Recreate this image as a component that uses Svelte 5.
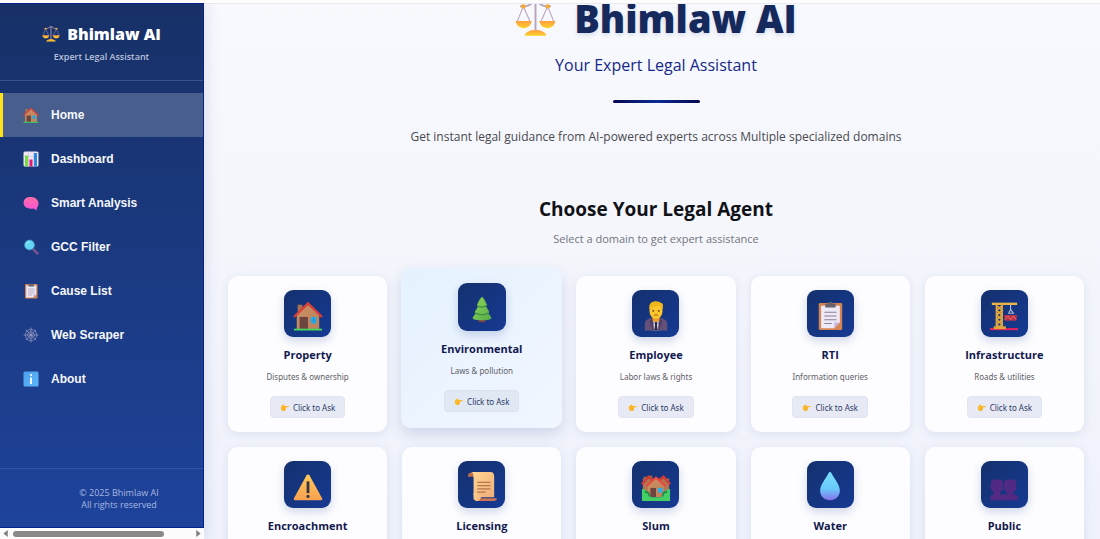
<script lang="ts">
    interface INavItem {
        label: string;
        icon: string;
        active?: boolean;
    }

    interface IAgent {
        title: string;
        text?: string;
        icon: string;
        raised?: boolean;
    }

    const navItems: INavItem[] = [
        { label: 'Home', icon: 'house', active: true },
        { label: 'Dashboard', icon: 'chart' },
        { label: 'Smart Analysis', icon: 'brain' },
        { label: 'GCC Filter', icon: 'magnifier' },
        { label: 'Cause List', icon: 'clipboard' },
        { label: 'Web Scraper', icon: 'web' },
        { label: 'About', icon: 'info' },
    ];

    const agents: IAgent[] = [
        { title: 'Property', text: 'Disputes & ownership', icon: 'house' },
        { title: 'Environmental', text: 'Laws & pollution', icon: 'tree', raised: true },
        { title: 'Employee', text: 'Labor laws & rights', icon: 'worker' },
        { title: 'RTI', text: 'Information queries', icon: 'clipboard' },
        { title: 'Infrastructure', text: 'Roads & utilities', icon: 'crane' },
        { title: 'Encroachment', icon: 'warning' },
        { title: 'Licensing', icon: 'scroll' },
        { title: 'Slum', icon: 'houses' },
        { title: 'Water', icon: 'drop' },
        { title: 'Public', icon: 'people' },
    ];
</script>

{#snippet icon(name: string)}
    <svg class="icon" viewBox="0 0 32 32" aria-hidden="true">
        {#if name === 'scales'}
            <path d="M16 2v24M4 6.500c5 .5 8-1 9.500-3h5c1.500 2 4.500 3.500 9.500 3" fill="none" stroke="#b9a3bd" stroke-width="1.500" />
            <path d="M6.500 6.500 1.500 19M6.500 6.500 12 19M25.500 6.500 20 19M25.500 6.500 30.500 19" stroke="#b79cb8" stroke-width=".8" />
            <circle cx="6.500" cy="6.500" r="1.700" fill="#f6a72c" />
            <circle cx="25.500" cy="6.500" r="1.700" fill="#f6a72c" />
            <path d="M.5 18h12.500c-.5 3.500-3 5.500-6.200 5.500S1 21.500.5 18Z" fill="url(#gold)" />
            <path d="M19 18h12.500c-.5 3.500-3 5.500-6.200 5.500S19.500 21.500 19 18Z" fill="url(#gold)" />
            <path d="M7.500 29.500C8 26.500 12 25 16 25s8 1.500 8.500 4.500Z" fill="url(#gold)" />
        {:else if name === 'house'}
            <path d="M5 4h5v10H5z" fill="#a9714f" />
            <path d="M4 15 16 4l12 11v15H4z" fill="url(#wall)" />
            <path d="M7 17h9v13H7z" fill="#6d4540" />
            <path d="M19 17h6v7h-6z" fill="#2daeea" />
            <path d="M22 17v7M19 20.500h6" stroke="#1687c8" stroke-width=".6" />
            <path d="M1 17 16 2.500 31 17" fill="none" stroke="#dc3d37" stroke-width="2.400" />
            <path d="M1 29.500h30v2H1z" fill="#43d45c" />
        {:else if name === 'chart'}
            <rect x="1" y="1" width="30" height="30" rx="3" fill="#ede7f5" />
            <path d="M1 11h30M1 21h30M11 1v30M21 1v30" stroke="#c6b9d6" />
            <path d="M4 9h6v22H4z" fill="#7bdb45" />
            <path d="M13 17h6v14h-6z" fill="#dc1f70" />
            <path d="M22 4h6v27h-6z" fill="#2c89df" />
        {:else if name === 'brain'}
            <path d="M2 20C-1 11 5 4 14 4c9-1 17 5 17 13 0 4-1 6-3 8l-1 6-5-4c-4 1-9 1-12-1-4 0-6-2-8-6Z" fill="url(#pink)" />
            <path d="M7 20c-2-5 2-7 4-5M10 9c3-2 5 1 4 4M18 7c3 2 1 5 5 6M15 20c3-3 6 1 9-2" fill="none" stroke="#f052bd" stroke-width="1.200" />
        {:else if name === 'magnifier'}
            <path d="m21 21 8 8" stroke="#75518f" stroke-width="5" stroke-linecap="round" />
            <circle cx="13" cy="12" r="10" fill="#63d5f5" stroke="#438bba" stroke-width="1.500" />
            <path d="M7 11c1-4 4-5 7-5" fill="none" stroke="#a5effc" stroke-width="2" />
        {:else if name === 'clipboard'}
            <rect x="4" y="2" width="25" height="29" rx="1.500" fill="#d48352" />
            <path d="M6.500 5h20v18l-6 6h-14z" fill="#eee9f7" />
            <path d="m26.500 23-6 6v-6z" fill="#c6b5d2" />
            <path d="M10 12h13M10 16h13M10 20h13M10 24h8" stroke="#85768f" />
            <path d="M11 3h3c0-3 5-3 5 0h3v4H11z" fill="#67616e" />
        {:else if name === 'web'}
            <g fill="none" stroke="#aaa4ca" stroke-width="1.200">
                <path d="M16 1v30M1 16h30M5.500 5.500l21 21M26.500 5.500l-21 21" />
                <path d="m16 4 8.500 3.500L28 16l-3.500 8.500L16 28l-8.500-3.500L4 16l3.500-8.500ZM16 9l5 2 2 5-2 5-5 2-5-2-2-5 2-5Z" />
                <path d="m16 13 3 3-3 3-3-3Z" />
            </g>
        {:else if name === 'info'}
            <rect x="1" y="1" width="30" height="30" rx="3" fill="url(#sky)" />
            <circle cx="16" cy="8" r="2.200" fill="#fff" />
            <path d="M14.200 13h3.600v13h-3.600z" fill="#fff" />
        {:else if name === 'tree'}
            <path d="M12.500 25h7v5h-7z" fill="#87403f" />
            <path d="M16 3c3 3 4 6 5 8 1 1 0 2-1 2 2 3 3 4 3.500 6 .4 1-.5 2-1 2 2 1.500 3 3 3.500 4.500C26.500 29 5.500 29 6 25.500 6.500 24 8 22 9.500 21c-1 0-1.500-1-1-2 .5-2 2-3 3.500-6-1 0-2-1-1-2 1-2 2-5 5-8Z" fill="url(#leaf)" />
            <path d="M11 12.500c3 2 7 2 10-.5M9 20c4 3 10 3 14 0" fill="none" stroke="#3f8e43" stroke-width="1.300" />
        {:else if name === 'worker'}
            <path d="M4 31.500v-7c0-4 4-6 8-7h8c4 1 8 3 8 7v7z" fill="#675078" />
            <path d="M12 16h8v5l-4 4-4-4z" fill="#e59b25" />
            <path d="m13.500 21 2.500 3 2.500-3 .5 10.500h-6z" fill="#ded8ed" />
            <path d="m14.500 23 1.500-1 1.500 1-.5 3 1 5.500h-4l1-5.500z" fill="#292a48" />
            <path d="m12 18-3 4 4 9.500h1zM20 18l3 4-4 9.500h-1z" fill="#4f3f67" />
            <ellipse cx="16" cy="10.500" rx="7" ry="8.500" fill="#fcc52c" />
            <path d="M9 9C7 0 17-2 23 3c1 2 0 4 0 6l-3-4c-4 1-8 0-11 4Z" fill="#efb71b" />
            <circle cx="13" cy="10.500" r="1" fill="#5c3b2a" />
            <circle cx="19" cy="10.500" r="1" fill="#5c3b2a" />
            <path d="M13.500 15.500c1.500-1 3.500-1 5 0" fill="none" stroke="#965b24" />
        {:else if name === 'crane'}
            <path d="M3 3h27" stroke="#e9b448" stroke-width="2.500" />
            <path d="M8 3v27M14 3v27M8 5l6 5-6 5 6 5-6 5 6 5M14 5l-6 5 6 5-6 5 6 5-6 5" fill="none" stroke="#dfa63c" stroke-width="1.800" />
            <path d="M23 4v5l-2 4h5l-3-4" fill="none" stroke="#aebad4" stroke-width="1.200" />
            <path d="M16 15h14l-1 6H17z" fill="#b63150" />
            <path d="m17 20 3-4 3 4 3-4 3 4" fill="none" stroke="#ef6b52" />
            <path d="M1 30h30" stroke="#e62461" stroke-width="2.200" />
            <path d="M5 27h13v3H5z" fill="#dfa63c" />
        {:else if name === 'warning'}
            <path d="M14.500 3.500c.8-1.200 2.200-1.200 3 0L31 28c.6 1.200 0 2-1.200 2H2.200C1 30 .4 29.200 1 28Z" fill="url(#amber)" />
            <path d="M14.500 10h3v12.500h-3z" fill="#343647" />
            <circle cx="16" cy="26" r="1.700" fill="#343647" />
        {:else if name === 'scroll'}
            <path d="M1 4c0-4 5-4 7-3v4H1z" fill="#bf6b4d" />
            <path d="M4 0h21c3 0 4 2 4 5v22H12c-4 0-5-2-5-5V5c0-3-1-5-3-5Z" fill="url(#paper)" />
            <path d="M11 11h14M11 14.500h14M11 18h14M11 21.500h9" stroke="#b67650" stroke-width="1.200" />
            <path d="M7 22v6c0 2 2 3 4 3h4v-5z" fill="url(#paper)" />
            <path d="M14 28h18c0 2-2 3-4 3H11c2 0 3-1 3-3Z" fill="#ca7355" />
        {:else if name === 'houses'}
            <path d="M2 7h28v18H2z" fill="#b67351" />
            <path d="M3 5h3v5H3zM9 4h3v5H9z" fill="#a66c4c" />
            <path d="m1 13 7-8 7 6M17 11l7-6 7 8" fill="none" stroke="#d33b35" stroke-width="2.500" />
            <path d="m7 14 9-8 9 8v13H7z" fill="url(#wall)" />
            <path d="m6 15 10-9 10 9" fill="none" stroke="#e8463b" stroke-width="2" />
            <path d="M10 17h6v10h-6z" fill="#6d4540" />
            <path d="M18 17h5v5h-5z" fill="#2daeea" />
            <path d="M1 18c5 0 8 4 9 9h12c1-5 4-9 9-9v13H1z" fill="#43cf64" />
            <path d="M4 21c3 0 5 2 5 5M28 21c-3 0-5 2-5 5" fill="none" stroke="#258c4c" stroke-width="2" />
        {:else if name === 'drop'}
            <path d="M16 0c1 0 1.500 1 2 2 4 7 8.500 12 8.500 18 0 6-4.500 10-10.500 10S5.500 26 5.500 20c0-6 4.500-11 8.500-18 .5-1 1-2 2-2Z" fill="url(#water)" />
        {:else if name === 'people'}
            <g fill="#522a83">
                <rect x="2" y="8" width="13" height="13" rx="4" />
                <rect x="16" y="8" width="13" height="13" rx="4" />
                <path d="M5 19h7v5h7v-5h7v5c4 0 5 2 5 6H1c0-4 1-6 4-6z" />
            </g>
        {:else if name === 'point'}
            <path d="M3 14c2-5 7-9 11-9 3 0 2 4 0 6h15c3 0 3 4 0 4h-9c3 1 2 5 0 5 2 1 1 4-1 4 1 1 0 4-2 4h-7c-4 0-8-5-7-14Z" fill="#fcb92e" />
            <path d="M14 15h6M14 20h6M13 24h6" stroke="#e39a20" />
        {/if}
    </svg>
{/snippet}

<svg class="defs" aria-hidden="true">
    <defs>
        <linearGradient id="gold" x2="0" y2="1"><stop stop-color="#ff9d42" /><stop offset="1" stop-color="#fcd324" /></linearGradient>
        <linearGradient id="wall" x2="1" y2="1"><stop stop-color="#cc9065" /><stop offset="1" stop-color="#bb8158" /></linearGradient>
        <linearGradient id="pink" x2="0" y2="1"><stop stop-color="#ff70a7" /><stop offset="1" stop-color="#f453d5" /></linearGradient>
        <linearGradient id="sky" x2="1" y2="1"><stop stop-color="#4ca0ee" /><stop offset="1" stop-color="#5bb6f7" /></linearGradient>
        <linearGradient id="leaf" x2="1" y2="1"><stop stop-color="#91d957" /><stop offset="1" stop-color="#55a948" /></linearGradient>
        <linearGradient id="amber" x2="0" y2="1"><stop stop-color="#ffc957" /><stop offset="1" stop-color="#f8a150" /></linearGradient>
        <linearGradient id="paper" x2="1" y2="1"><stop stop-color="#ffd894" /><stop offset="1" stop-color="#efad79" /></linearGradient>
        <linearGradient id="water" x2="0" y2="1"><stop stop-color="#7ce2ff" /><stop offset=".6" stop-color="#69c8fa" /><stop offset="1" stop-color="#8772eb" /></linearGradient>
    </defs>
</svg>

<div class="app">
    <aside>
        <div class="sidebar">
            <header>
                <div class="brand">{@render icon('scales')}<span>Bhimlaw AI</span></div>
                <p>Expert Legal Assistant</p>
            </header>

            <nav>
                {#each navItems as item}
                    <a href="#{item.icon}" class:active={item.active}>
                        {@render icon(item.icon)}
                        {item.label}
                    </a>
                {/each}
            </nav>

            <footer>
                <p>© 2025 Bhimlaw AI</p>
                <p>All rights reserved</p>
            </footer>
        </div>

        <div class="scrollbar">
            <svg viewBox="0 0 6 8"><path d="M5 0v8L0 4z" /></svg>
            <div class="track"><div class="thumb"></div></div>
            <svg viewBox="0 0 6 8"><path d="M1 0v8l5-4z" /></svg>
        </div>
    </aside>

    <main>
        <section class="hero">
            <h1>{@render icon('scales')}<span>Bhimlaw AI</span></h1>
            <p class="tagline">Your Expert Legal Assistant</p>
            <div class="divider"></div>
            <p class="intro">Get instant legal guidance from AI-powered experts across Multiple specialized domains</p>
        </section>

        <section class="agents">
            <h2>Choose Your Legal Agent</h2>
            <p class="hint">Select a domain to get expert assistance</p>

            <div class="grid">
                {#each agents as agent}
                    <article class:raised={agent.raised}>
                        <div class="tile">{@render icon(agent.icon)}</div>
                        <h3>{agent.title}</h3>
                        {#if agent.text}
                            <p>{agent.text}</p>
                            <button type="button">{@render icon('point')}Click to Ask</button>
                        {/if}
                    </article>
                {/each}
            </div>
        </section>
    </main>
</div>

<style>
    :global(body) {
        background: #fff;
        font-family: "Open Sans", "Noto Sans", sans-serif;
    }

    h1, h2, h3, p {
        margin: 0;
    }

    .defs {
        position: absolute;
        width: 0;
        height: 0;
    }

    .icon {
        display: block;
        flex: none;
    }

    .app {
        display: flex;
        box-sizing: border-box;
        height: 100vh;
        border-top: 3px solid #fdfdfe;
        overflow: hidden;
    }

    aside {
        display: flex;
        flex-direction: column;
        flex: none;
        width: 204px;
        box-shadow: 2px 0 14px rgba(30, 58, 138, 0.12);
        z-index: 1;
    }

    .sidebar {
        display: flex;
        flex: 1;
        flex-direction: column;
        box-sizing: border-box;
        border: solid #07208a;
        border-width: 1px 1px 1px 0;
        background: linear-gradient(#173067, #1e439b);
    }

    header {
        padding: 19px 0 16px;
        border-bottom: 1px solid #38528c;
        text-align: center;

        & p {
            margin-top: 5px;
            color: #b7c1da;
            font-size: 9px;
            font-weight: 600;
            line-height: 14px;
        }
    }

    .brand {
        display: flex;
        align-items: center;
        justify-content: center;
        gap: 7px;
        color: #fff;
        font-size: 16px;
        font-weight: 800;
        line-height: 22px;

        & :global(.icon) {
            width: 18px;
            height: 18px;
        }
    }

    nav {
        display: flex;
        flex: 1;
        flex-direction: column;
        padding-top: 12px;

        & a {
            display: flex;
            align-items: center;
            gap: 12px;
            height: 44px;
            padding-left: 20px;
            border-left: 3px solid transparent;
            color: #f5f7fc;
            font-family: "Liberation Sans", Arial, sans-serif;
            font-size: 12px;
            font-weight: 700;
            text-decoration: none;
        }

        & a.active {
            border-left-color: #ffe21a;
            background: #485e8c;
        }

        & :global(.icon) {
            width: 16px;
            height: 16px;
        }
    }

    footer {
        padding: 18px 0 16px 35px;
        border-top: 1px solid #32539f;
        color: #a7b7e0;
        font-size: 9px;
        line-height: 12px;
        text-align: center;
    }

    .scrollbar {
        display: flex;
        align-items: center;
        gap: 4px;
        height: 11px;
        padding: 0 3px;
        background: #fcfcfd;

        & svg {
            width: 6px;
            height: 7px;
            fill: #7f7f7f;
        }
    }

    .track {
        flex: 1;
    }

    .thumb {
        width: 85%;
        height: 6px;
        border-radius: 3px;
        background: #8a8a8a;
    }

    main {
        flex: 1;
        min-width: 0;
        padding: 0 16px 0 24px;
        border-top: 1px solid #ebe9f1;
        background: linear-gradient(#f8f9fd, #eff2fb);
        text-align: center;
        overflow: hidden;
    }

    h1 {
        display: flex;
        align-items: center;
        justify-content: center;
        gap: 18px;
        color: #15295c;
        font-size: 38px;
        font-weight: 800;
        line-height: 28px;
        text-shadow: 0 2px 4px rgba(30, 58, 138, 0.15);

        & :global(.icon) {
            width: 41px;
            height: 41px;
            margin: -8px 0;
        }
    }

    .tagline {
        margin-top: 21px;
        color: #14298a;
        font-size: 16px;
        line-height: 24px;
    }

    .divider {
        width: 87px;
        height: 3px;
        margin: 23px auto 24px;
        border-radius: 2px;
        background: linear-gradient(90deg, #070750, #0c2c94, #070750);
    }

    .intro {
        color: #48494f;
        font-size: 12px;
        line-height: 20px;
    }

    .agents {
        margin-top: 48px;
    }

    h2 {
        color: #111217;
        font-size: 19px;
        font-weight: 700;
        line-height: 28px;
    }

    .hint {
        margin-top: 8px;
        color: #73757b;
        font-size: 11px;
        line-height: 16px;
    }

    .grid {
        display: grid;
        grid-template-columns: repeat(5, 1fr);
        grid-auto-rows: minmax(156px, auto);
        gap: 15px;
        margin-top: 29px;
    }

    article {
        display: flex;
        flex-direction: column;
        align-items: center;
        padding: 14px 0;
        border-radius: 10px;
        background: #fdfdff;
        box-shadow: 0 2px 10px rgba(30, 58, 138, 0.1);

        & p {
            margin-top: 6px;
            color: #5f6068;
            font-family: "Noto Sans", sans-serif;
            font-size: 8px;
            line-height: 14px;
        }

        &.raised {
            margin: -2px -1px;
            padding: 15px 0 16px;
            background: linear-gradient(135deg, #e5f2ff, #f1f6ff);
            box-shadow: 0 6px 14px rgba(30, 58, 138, 0.16);
            transform: translateY(-6px);
        }
    }

    .tile {
        display: flex;
        align-items: center;
        justify-content: center;
        box-sizing: border-box;
        width: 47px;
        height: 47px;
        padding-top: 4px;
        border-radius: 9px;
        background: linear-gradient(135deg, #14306e, #163a93);
        box-shadow: 0 4px 10px rgba(30, 58, 138, 0.2);

        & :global(.icon) {
            width: 30px;
            height: 30px;
        }
    }

    .raised .tile {
        width: 48px;
        height: 48px;
    }

    h3 {
        margin-top: 9px;
        color: #12194f;
        font-size: 11px;
        font-weight: 700;
        line-height: 18px;
    }

    button {
        display: flex;
        align-items: center;
        gap: 4px;
        height: 22px;
        margin-top: 12px;
        padding: 0 9px;
        border: 1px solid #e1e5f1;
        border-radius: 4px;
        background: #e7eaf4;
        color: #2b3966;
        font-family: "Noto Sans", sans-serif;
        font-size: 8px;

        & :global(.icon) {
            width: 9px;
            height: 9px;
        }
    }

    .raised button {
        border-color: #dae3ef;
        background: #dfe8f3;
    }
</style>
